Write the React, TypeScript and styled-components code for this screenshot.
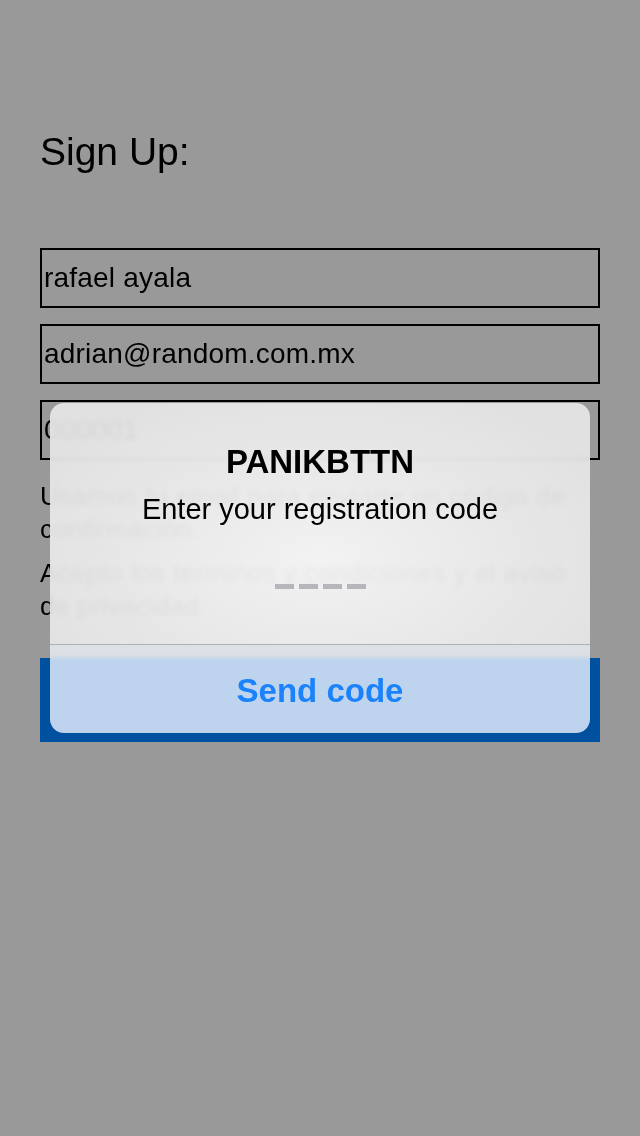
import styled, { createGlobalStyle } from 'styled-components';

const GlobalStyle = createGlobalStyle`
  html, body {
    margin: 0;
    padding: 0;
    background: #999999;
  }
  body {
    font-family: 'Liberation Sans', Arial, Helvetica, sans-serif;
    color: #000;
  }
  * {
    box-sizing: border-box;
  }
`;

const Screen = styled.div`
  min-height: 1136px;
  padding: 130px 40px 0;
  display: flex;
  flex-direction: column;
`;

const Title = styled.h1`
  margin: 0 0 74px;
  font-size: 39px;
  line-height: 44px;
  font-weight: 400;
`;

const Fields = styled.div`
  display: flex;
  flex-direction: column;
  gap: 16px;
`;

const Field = styled.div`
  height: 60px;
  border: 2px solid #000;
  padding: 0 2px;
  display: flex;
  align-items: center;
  font-size: 28px;
  line-height: 32px;
  letter-spacing: 0.2px;
  white-space: nowrap;
  overflow: hidden;
`;

const Note = styled.p<{ $top: number }>`
  margin: ${(p) => p.$top}px 0 0;
  width: 560px;
  font-size: 26px;
  line-height: 33px;
  letter-spacing: 0.4px;
`;

const Submit = styled.button`
  margin-top: 35px;
  height: 84px;
  width: 100%;
  border: none;
  background: #0050a0;
`;

const Overlay = styled.div`
  position: fixed;
  inset: 0;
  display: flex;
  align-items: center;
  justify-content: center;
`;

const Alert = styled.div`
  width: 540px;
  height: 330px;
  border-radius: 14px;
  overflow: hidden;
  display: flex;
  flex-direction: column;
  backdrop-filter: blur(2.5px) saturate(140%);
`;

const AlertBody = styled.div`
  height: 241px;
  padding-top: 40px;
  display: flex;
  flex-direction: column;
  align-items: center;
  background: radial-gradient(
    ellipse 60% 75% at 50% 65%,
    rgba(249, 249, 249, 0.93),
    rgba(231, 231, 231, 0.92) 100%
  );
`;

const AlertTitle = styled.div`
  font-size: 33px;
  line-height: 38px;
  font-weight: 700;
`;

const AlertMessage = styled.div`
  margin-top: 10px;
  font-size: 29px;
  line-height: 36px;
`;

const CodeSlots = styled.div`
  margin-top: 57px;
  display: flex;
  gap: 5px;
`;

const Slot = styled.span`
  width: 19px;
  height: 5px;
  background: #b6b6bb;
`;

const AlertAction = styled.button`
  flex: 1;
  border: none;
  border-top: 1px solid #b1b2b6;
  background: rgba(238, 242, 248, 0.8);
  padding: 3px 0 0;
  font-family: inherit;
  font-size: 33px;
  font-weight: 700;
  color: #1a82fb;
  display: flex;
  align-items: center;
  justify-content: center;
`;

export default function App() {
  return (
    <>
      <GlobalStyle />
      <Screen>
        <Title>Sign Up:</Title>
        <Fields>
          <Field>rafael ayala</Field>
          <Field>adrian@random.com.mx</Field>
          <Field>000001</Field>
        </Fields>
        <Note $top={20}>Usamos tu email para enviarte un código de confirmación.</Note>
        <Note $top={11}>Acepto los términos y condiciones y el aviso de privacidad.</Note>
        <Submit type="button" aria-label="Registrar" />
      </Screen>
      <Overlay>
        <Alert>
          <AlertBody>
            <AlertTitle>PANIKBTTN</AlertTitle>
            <AlertMessage>Enter your registration code</AlertMessage>
            <CodeSlots>
              {[0, 1, 2, 3].map((i) => (
                <Slot key={i} />
              ))}
            </CodeSlots>
          </AlertBody>
          <AlertAction type="button">Send code</AlertAction>
        </Alert>
      </Overlay>
    </>
  );
}
